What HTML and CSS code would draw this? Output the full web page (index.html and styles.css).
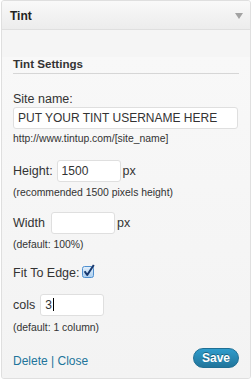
FILE: index.html
```html
<!DOCTYPE html>
<html>
<head>
<meta charset="utf-8">
<link rel="stylesheet" href="styles.css">
</head>
<body>
<div class="widget">
  <div class="widget-top">
    <h3 class="widget-title">Tint</h3>
    <span class="arrow"></span>
  </div>
  <div class="widget-inside">
    <h4 class="section">Tint Settings</h4>

    <div class="label first">Site name:</div>
    <div class="input wide">PUT YOUR TINT USERNAME HERE</div>
    <p class="help h-url">http://www.tintup.com/[site_name]</p>

    <div class="row r-height">
      <span class="label">Height:</span>
      <span class="input small i-height">1500</span>
      <span class="label unit">px</span>
    </div>
    <p class="help h-rec">(recommended 1500 pixels height)</p>

    <div class="row r-width">
      <span class="label">Width</span>
      <span class="input small i-width"></span>
      <span class="label unit">px</span>
    </div>
    <p class="help h-def">(default: 100%)</p>

    <div class="row r-fit">
      <span class="label">Fit To Edge:</span>
      <svg class="checkbox" width="14" height="15" viewBox="0 0 14 15">
        <defs>
          <linearGradient id="cbg" x1="0" y1="0" x2="0" y2="1">
            <stop offset="0" stop-color="#e4f0fb"/>
            <stop offset="1" stop-color="#a9cdef"/>
          </linearGradient>
        </defs>
        <rect x="0.5" y="2.5" width="11" height="11" rx="2" fill="url(#cbg)" stroke="#4f8fcf"/>
        <path d="M2.6 7.2 L5.2 11 L11.8 1" fill="none" stroke="#17386e" stroke-width="2" stroke-linejoin="round"/>
      </svg>
    </div>

    <div class="row r-cols">
      <span class="label">cols</span>
      <span class="input small i-cols">3<span class="caret"></span></span>
    </div>
    <p class="help h-cols">(default: 1 column)</p>

    <div class="actions">
      <span class="links"><a class="link">Delete</a> | <a class="link">Close</a></span>
      <span class="save">Save</span>
    </div>
  </div>
</div>
</body>
</html>
```

FILE: styles.css
```css
html, body {
  margin: 0;
  padding: 0;
  background: #ffffff;
}

body {
  font-family: "Liberation Sans", Arial, sans-serif;
  color: #333333;
}

.widget {
  width: 248px;
  margin-left: 1px;
  border: 1px solid #dfdfdf;
  border-radius: 3px;
  background: #f5f5f5;
  overflow: hidden;
}

.widget-top {
  height: 28px;
  display: flex;
  align-items: center;
  justify-content: space-between;
  padding: 0 7px 0 8px;
  background: linear-gradient(#f9f9f9, #ececec);
  border-bottom: 1px solid #dfdfdf;
}

.widget-title {
  margin: 0;
  padding-top: 1px;
  font-size: 12px;
  font-weight: bold;
  line-height: 28px;
  color: #222222;
}

.arrow {
  width: 0;
  height: 0;
  border-left: 4px solid transparent;
  border-right: 4px solid transparent;
  border-top: 6px solid #a3a3a3;
  margin-top: 1px;
}

.widget-inside {
  padding: 0 11px 9px 11px;
  background: linear-gradient(#f8f8f8, #f3f3f3);
}

.section {
  margin: 27px 0 0 0;
  padding: 0 0 2px 0;
  font-size: 11.6px;
  line-height: 14px;
  font-weight: bold;
  color: #333333;
  border-bottom: 1px solid #d6d6d6;
}

.label {
  font-size: 12.5px;
  line-height: 15px;
  color: #333333;
  white-space: nowrap;
}

.label.first {
  margin-top: 18px;
}

.input {
  box-sizing: border-box;
  display: block;
  height: 22px;
  border: 1px solid #dfdfdf;
  border-radius: 3px;
  background: #ffffff;
  padding: 0 4px;
  font-size: 12px;
  line-height: 20px;
  color: #333333;
  white-space: nowrap;
}

.input.wide {
  width: 225px;
}

.input.small {
  width: 64px;
  flex: none;
}

.help {
  margin: 0;
  font-size: 10.4px;
  line-height: 13px;
  color: #333333;
}

.h-url { margin-top: 3px; }
.h-rec { margin-top: 4px; }
.h-def { margin-top: 4px; }
.h-cols { margin-top: 5px; }

.row {
  display: flex;
  align-items: center;
}

.r-height { margin-top: 15px; }
.r-height .i-height { margin-left: 4px; }
.r-height .unit { margin-left: 2px; }

.r-width { margin-top: 13px; }
.r-width .i-width { margin-left: 6px; }
.r-width .unit { margin-left: 2px; }

.r-fit {
  margin-top: 15px;
  align-items: flex-start;
  height: 15px;
}

.checkbox {
  margin-left: 3px;
  margin-top: -2px;
  flex: none;
}

.r-cols { margin-top: 13px; }
.r-cols .i-cols { margin-left: 5px; }

.caret {
  display: inline-block;
  width: 1px;
  height: 13px;
  background: #000000;
  margin-left: 1px;
  vertical-align: -2px;
}

.actions {
  margin-top: 14px;
  display: flex;
  align-items: flex-end;
  justify-content: space-between;
}

.links {
  font-size: 12px;
  line-height: 15px;
  color: #21759b;
}

.link {
  color: #21759b;
  text-decoration: none;
}

.save {
  box-sizing: border-box;
  width: 46px;
  height: 20px;
  border-radius: 10px;
  border: 1px solid #1f6f94;
  background: linear-gradient(#2f9ccc, #21759b);
  color: #ffffff;
  font-size: 12px;
  font-weight: bold;
  line-height: 18px;
  text-align: center;
  text-shadow: 0 -1px 0 rgba(0, 0, 0, 0.35);
  margin-bottom: 1px;
}
```
